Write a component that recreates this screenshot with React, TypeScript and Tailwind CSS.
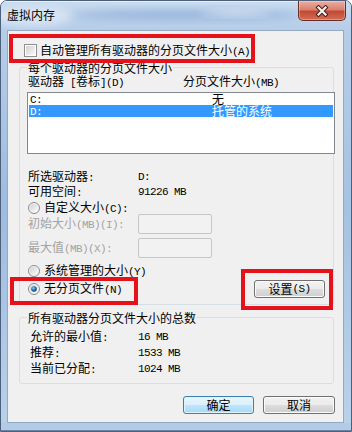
import React from 'react';

const T = ({ s }: { s: string }) => {
  const parts = s.split(/([\x20-\x7e]+)/);
  return (
    <>
      {parts.map((p, i) =>
        /^[\x20-\x7e]+$/.test(p) ? (
          <span key={i} className="font-['Liberation_Mono',monospace] text-[11px] tracking-[-0.6px]">
            {p}
          </span>
        ) : (
          <React.Fragment key={i}>{p}</React.Fragment>
        )
      )}
    </>
  );
};

const Radio = ({ id, checked }: { id: string; checked?: boolean }) => (
  <svg width="12" height="12" viewBox="0 0 12 12" className="shrink-0">
    <defs>
      <linearGradient id={id + 'a'} x1="0" y1="0" x2="1" y2="1">
        <stop offset="0" stopColor="#cfcfcf" />
        <stop offset="1" stopColor="#ffffff" />
      </linearGradient>
      <radialGradient id={id + 'b'} cx="0.4" cy="0.35" r="0.7">
        <stop offset="0" stopColor="#8fd0f7" />
        <stop offset="0.5" stopColor="#2d73b8" />
        <stop offset="1" stopColor="#0e3566" />
      </radialGradient>
    </defs>
    <circle cx="6" cy="6" r="5.5" fill="#f5f5f5" stroke="#8a8a8a" />
    <circle cx="6" cy="6" r="4" fill={`url(#${id}a)`} />
    {checked && <circle cx="6" cy="6" r="2.8" fill={`url(#${id}b)`} />}
  </svg>
);

const Button = ({ label, def, w }: { label: React.ReactNode; def?: boolean; w: string }) => (
  <div
    className={
      def
        ? `${w} h-[18px] rounded-[3px] border border-[#3c7fb1] bg-[linear-gradient(180deg,#eaf6fd_0%,#d9f0fc_50%,#bee6fd_50%,#a7d9f5_100%)] shadow-[inset_0_0_0_1px_#dff3fd] flex items-center justify-center`
        : `${w} h-[18px] rounded-[3px] border border-[#707070] bg-[linear-gradient(180deg,#f2f2f2_0%,#ebebeb_50%,#dddddd_50%,#cfcfcf_100%)] shadow-[inset_0_0_0_1px_#fbfbfb] flex items-center justify-center`
    }
  >
    {label}
  </div>
);

export default function App() {
  return (
    <div className="relative w-[352px] h-[432px] overflow-hidden rounded-t-[7px] border border-[#4d607b] bg-[#b3cbe7] font-['Noto_Sans_CJK_SC',sans-serif] text-[12px] leading-[14px] text-black flex flex-col">
      {/* title bar */}
      <div className="relative h-[29px] shrink-0 flex items-start">
        <svg className="absolute inset-0" width="350" height="29" viewBox="0 0 350 29">
          <defs>
            <linearGradient id="tb" x1="0" y1="0" x2="0" y2="1">
              <stop offset="0" stopColor="#c9dbef" />
              <stop offset="1" stopColor="#b6cde8" />
            </linearGradient>
            <filter id="bl" x="-50%" y="-50%" width="200%" height="200%">
              <feGaussianBlur stdDeviation="4" />
            </filter>
          </defs>
          <rect width="350" height="29" fill="url(#tb)" />
          <ellipse cx="185" cy="14" rx="115" ry="5" fill="#97b6db" filter="url(#bl)" />
          <ellipse cx="235" cy="12" rx="35" ry="3" fill="#e4eef8" opacity="0.8" filter="url(#bl)" />
          <ellipse cx="30" cy="15" rx="40" ry="10" fill="#d8e5f3" filter="url(#bl)" />
          <rect x="0" y="0" width="350" height="1" fill="#e6eff9" />
        </svg>
        <span className="relative mt-[7px] ml-[6px]">虚拟内存</span>
        <div className="relative ml-auto mr-[5px] w-[48px] h-[20px] rounded-b-[5px] border border-t-0 border-[#6b2c25] bg-[linear-gradient(180deg,#eab0a2_0%,#d98170_45%,#c14a33_55%,#d36d53_100%)] shadow-[inset_0_0_0_1px_rgba(255,255,255,0.3)] flex items-center justify-center">
          <svg width="14" height="12" viewBox="0 0 14 12">
            <path d="M3.5 2.5 L10.5 9.5 M10.5 2.5 L3.5 9.5" stroke="#4a1d16" strokeWidth="4.2" strokeLinecap="square" />
            <path d="M3.5 2.5 L10.5 9.5 M10.5 2.5 L3.5 9.5" stroke="#f4f4f4" strokeWidth="2.2" strokeLinecap="square" />
          </svg>
        </div>
      </div>

      <div className="flex h-[393px] shrink-0">
        <div className="w-[6px] bg-[linear-gradient(180deg,#b6cde8,#9ebcdf_45%,#b9d0ea)]" />
        <div className="w-[337px] border border-[#94a9c3] bg-[#f0f0f0] flex flex-col">
          {/* auto manage checkbox */}
          <div className="mt-[13px] ml-[16px] h-[13px] flex items-center gap-[3px]">
            <div className="w-[13px] h-[13px] border border-[#8f8f8f] bg-white p-[1px] shrink-0">
              <div className="w-full h-full bg-[linear-gradient(135deg,#d2d2d2,#f9f9f9)]" />
            </div>
            <span className="whitespace-nowrap">
              <T s="自动管理所有驱动器的分页文件大小(A)" />
            </span>
          </div>

          {/* per-drive group */}
          <fieldset className="mt-[4px] ml-[11px] w-[315px] min-w-0 border border-[#d5dfe5] rounded-[3px] pl-[7px] pb-[6px]">
            <legend className="px-[1px] leading-[13px] h-[13px]">每个驱动器的分页文件大小</legend>
            <div className="mt-[1px] h-[14px] flex items-center pl-[1px] whitespace-nowrap">
              <div className="w-[155px]">
                <T s="驱动器 [卷标](D)" />
              </div>
              <div>
                <T s="分页文件大小(MB)" />
              </div>
            </div>
            <div className="mt-[3px] h-[62px] w-[308px] border border-[#828790] bg-white">
              <div className="h-[12px] mx-[1px] pl-[1px] flex items-center leading-[12px]">
                <div className="w-[182px]">
                  <T s="C:" />
                </div>
                <div>无</div>
              </div>
              <div className="h-[12px] mx-[1px] pl-[1px] flex items-center leading-[12px] bg-[#3399ff] text-white">
                <div className="w-[182px]">
                  <T s="D:" />
                </div>
                <div>托管的系统</div>
              </div>
            </div>
            <div className="mt-[16px] h-[14px] flex items-center pl-[1px]">
              <div className="w-[110px]">
                <T s="所选驱动器:" />
              </div>
              <T s="D:" />
            </div>
            <div className="mt-[1px] h-[14px] flex items-center pl-[1px]">
              <div className="w-[110px]">
                <T s="可用空间:" />
              </div>
              <T s="91226 MB" />
            </div>
            <div className="mt-[3px] h-[12px] flex items-center gap-[4px] pl-[1px]">
              <Radio id="r1" />
              <span>
                <T s="自定义大小(C):" />
              </span>
            </div>
            <div className="h-[20px] flex items-center pl-[1px]">
              <div className="w-[110px] text-[#a3a3a3]">
                <T s="初始大小(MB)(I):" />
              </div>
              <div className="w-[74px] h-[20px] border border-[#c6c6c6] rounded-[2px] bg-[#f2f2f2]" />
            </div>
            <div className="mt-[4px] h-[20px] flex items-center pl-[1px]">
              <div className="w-[110px] text-[#a3a3a3]">
                <T s="最大值(MB)(X):" />
              </div>
              <div className="w-[74px] h-[20px] border border-[#c6c6c6] rounded-[2px] bg-[#f2f2f2]" />
            </div>
            <div className="mt-[7px] h-[12px] flex items-center gap-[4px] pl-[1px]">
              <Radio id="r2" />
              <span>
                <T s="系统管理的大小(Y)" />
              </span>
            </div>
            <div className="mt-[3px] h-[18px] flex items-center justify-between pl-[1px]">
              <div className="flex items-center gap-[4px]">
                <Radio id="r3" checked />
                <span>
                  <T s="无分页文件(N)" />
                </span>
              </div>
              <div className="mr-[8px]">
                <Button w="w-[71px]" label={<T s="设置(S)" />} />
              </div>
            </div>
          </fieldset>

          {/* totals group */}
          <fieldset className="mt-[6px] ml-[11px] w-[315px] min-w-0 border border-[#d5dfe5] rounded-[3px] pl-[7px] pb-[6px]">
            <legend className="px-[1px] leading-[13px] h-[13px]">所有驱动器分页文件大小的总数</legend>
            <div className="mt-[5px] h-[16px] flex items-center pl-[3px]">
              <div className="w-[108px]">
                <T s="允许的最小值:" />
              </div>
              <T s="16 MB" />
            </div>
            <div className="h-[16px] flex items-center pl-[3px]">
              <div className="w-[108px]">
                <T s="推荐:" />
              </div>
              <T s="1533 MB" />
            </div>
            <div className="h-[16px] flex items-center pl-[3px]">
              <div className="w-[108px]">
                <T s="当前已分配:" />
              </div>
              <T s="1024 MB" />
            </div>
          </fieldset>

          <div className="mt-[12px] flex justify-end gap-[9px] pr-[8px]">
            <Button w="w-[71px]" def label="确定" />
            <Button w="w-[72px]" label="取消" />
          </div>
        </div>
        <div className="w-[7px] bg-[linear-gradient(180deg,#b6cde8,#a6c2e2_45%,#bad1ea)]" />
      </div>
      <div className="flex-1 border-b border-[#6d83a1] bg-[#b3cbe7]" />

      {/* annotation boxes */}
      <div className="absolute left-[8px] top-[33px] w-[246px] h-[29px] border-[4px] border-[#e5121b]" />
      <div className="absolute left-[9px] top-[276px] w-[128px] h-[28px] border-[4px] border-[#e5121b]" />
      <div className="absolute left-[240px] top-[268px] w-[92px] h-[41px] border-[4px] border-[#e5121b]" />
    </div>
  );
}
